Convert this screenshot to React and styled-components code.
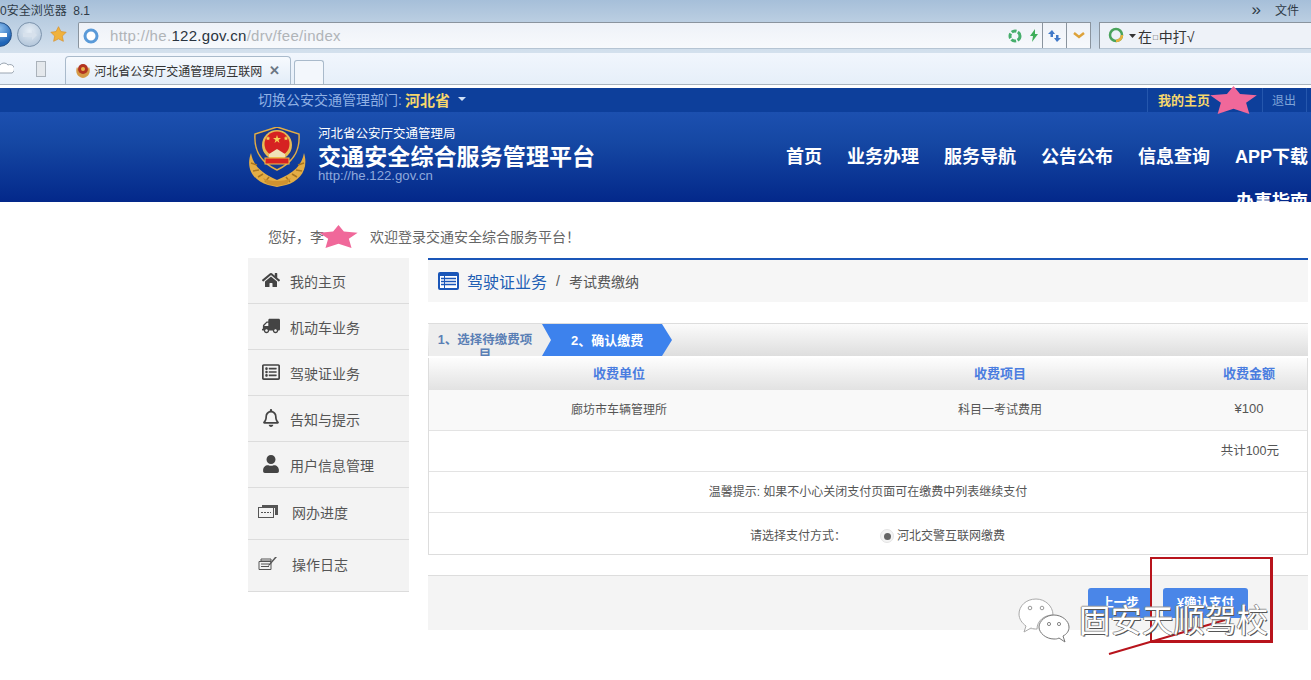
import styled, { createGlobalStyle } from "styled-components";
import { FaHome, FaTruck, FaRegListAlt, FaRegBell, FaUser } from "react-icons/fa";

const SANS = `"Liberation Sans", "Noto Sans CJK SC", sans-serif`;

const GlobalStyle = createGlobalStyle`
  html, body {
    margin: 0;
    padding: 0;
    background: #fff;
    height: 680px;
    overflow: hidden;
    font-family: ${SANS};
  }
  * { box-sizing: border-box; }
`;

const Page = styled.div`
  position: relative;
  width: 1311px;
  height: 680px;
  overflow: hidden;
`;

/* browser chrome */
const Chrome = styled.div`
  height: 85px;
  background: linear-gradient(#a6bfd9 0, #b9cde1 20px, #d3e0ed 52px);
  border-bottom: 1px solid #a9b4bf;
`;

const TitleBar = styled.div`
  height: 21px;
  display: flex;
  align-items: center;
  justify-content: space-between;
  padding: 0 12px 2px 0;
  font-size: 12px;
  color: #2f3b47;
  white-space: nowrap;
`;

const TitleRight = styled.div`
  display: flex;
  gap: 14px;
  align-items: center;
`;

const Chevrons = styled.span`
  font-size: 17px;
  line-height: 14px;
`;

const AddressRow = styled.div`
  height: 32px;
  display: flex;
  align-items: flex-start;
  padding-top: 1px;
`;

const NavCircle = styled.div`
  width: 25px;
  height: 25px;
  border-radius: 50%;
  flex: none;
  display: flex;
  align-items: center;
  justify-content: center;
  border: 1px solid ${(p) => (p.$active ? "#234f86" : "#7c93ac")};
  background: ${(p) =>
    p.$active
      ? "radial-gradient(circle at 50% 25%, #8fc0ee, #1f64b6 70%)"
      : "radial-gradient(circle at 50% 35%, #e6eef6, #b3c6da 80%)"};
  margin-left: ${(p) => p.$offset}px;
`;

const StarSlot = styled.div`
  width: 18px;
  margin: 4px 10px 0 8px;
  flex: none;
`;

const AddressBox = styled.div`
  width: 1013px;
  height: 27px;
  background: linear-gradient(#eef2f8, #f7f9fc);
  border: 1px solid #8a949e;
  border-bottom-color: #b5c4d3;
  border-radius: 2px 0 0 2px;
  display: flex;
  align-items: center;
  padding-left: 4px;
  flex: none;
`;

const Url = styled.div`
  margin-left: 11px;
  flex: 1;
  font-size: 15px;
  letter-spacing: 0.3px;
  color: #b0b4b8;
  white-space: nowrap;
  & b {
    font-weight: 400;
    color: #2a3440;
  }
`;

const AddressTool = styled.div`
  height: 100%;
  width: ${(p) => p.$w}px;
  display: flex;
  align-items: center;
  justify-content: center;
  border-left: ${(p) => (p.$line ? "1px solid #8a949e" : "0")};
  flex: none;
`;

const SearchBox = styled.div`
  margin-left: 8px;
  flex: 1;
  height: 27px;
  background: #eef2f8;
  border: 1px solid #8a949e;
  border-right: 0;
  border-bottom-color: #b5c4d3;
  display: flex;
  align-items: center;
  padding-left: 8px;
  gap: 3px;
  font-size: 14px;
  color: #333;
`;

const SearchText = styled.span`
  margin-left: -1px;
  white-space: nowrap;
`;

const SmallSquare = styled.span`
  font-size: 8px;
  margin: 0 1px;
  vertical-align: 2px;
`;

const TabRow = styled.div`
  height: 31px;
  background: linear-gradient(#f1f6fd, #e6eff9);
  display: flex;
  align-items: flex-end;
  padding-left: 0;
`;

const TabIcon = styled.div`
  width: ${(p) => p.$w}px;
  flex: none;
  align-self: center;
  padding-left: ${(p) => p.$left}px;
  display: flex;
`;

const Tab = styled.div`
  width: 226px;
  height: 28px;
  margin-left: 6px;
  background: linear-gradient(#f7fafe, #e3edf8);
  border: 1px solid #a9bacb;
  border-bottom: 0;
  border-radius: 4px 4px 0 0;
  display: flex;
  align-items: center;
  padding-left: 9px;
  font-size: 12px;
  color: #333;
  white-space: nowrap;
  flex: none;
`;

const TabClose = styled.span`
  margin-left: 3px;
  font-weight: 700;
  font-size: 13px;
  color: #6b7683;
`;

const NewTab = styled.div`
  width: 30px;
  height: 24px;
  margin-left: 3px;
  background: #f3f7fc;
  border: 1px solid #a9bacb;
  border-bottom: 0;
  border-radius: 3px 3px 0 0;
`;

/* site header */
const TopBar = styled.div`
  margin-top: 3px;
  height: 24px;
  background: #0d3f9b;
  display: flex;
  align-items: center;
  justify-content: space-between;
  padding: 0 4px 0 258px;
  font-size: 14px;
  color: #8fb0e4;
  white-space: nowrap;
`;

const Dept = styled.div`
  display: flex;
  align-items: center;
  gap: 3px;
  margin-top: -2px;
  & b {
    color: #f6d76c;
    font-weight: 700;
    font-size: 15px;
  }
`;

const Caret = styled.i`
  margin: 0 0 0 5px;
  border: 4px solid transparent;
  border-top-color: #cfe0f7;
  border-bottom: 0;
`;

const UserLinks = styled.div`
  display: flex;
  height: 100%;
`;

const UserCell = styled.div`
  width: ${(p) => p.$w}px;
  display: flex;
  align-items: center;
  padding: 0 0 2px ${(p) => p.$left}px;
  border-left: 1px solid #2557ad;
  border-right: ${(p) => (p.$end ? "1px solid #2557ad" : "0")};
  color: ${(p) => (p.$gold ? "#f6d76c" : "#7fa3d8")};
  font-weight: ${(p) => (p.$gold ? 700 : 400)};
  font-size: ${(p) => (p.$gold ? 13 : 12)}px;
`;

const Banner = styled.div`
  height: 90px;
  background: linear-gradient(#1c50b0 0, #1547a3 35%, #03288a 100%);
  overflow: hidden;
  display: flex;
  padding: 12px 0 0 248px;
  color: #fff;
`;

const Brand = styled.div`
  width: 70px;
  flex: none;
  margin-top: 3px;
`;

const BrandText = styled.div`
  width: 280px;
  flex: none;
  white-space: nowrap;
`;

const BrandSub = styled.div`
  font-size: 12.5px;
  line-height: 18px;
  margin-top: 1px;
`;

const BrandTitle = styled.div`
  font-size: 23px;
  font-weight: 700;
  line-height: 28px;
  letter-spacing: 0.1px;
`;

const BrandUrl = styled.div`
  font-size: 13.2px;
  line-height: 10px;
  color: #8fa9dc;
`;

const Nav = styled.div`
  margin-left: 186px;
  width: 524px;
  padding-top: 20px;
  display: flex;
  flex-wrap: wrap;
  justify-content: flex-end;
  column-gap: 25px;
  row-gap: 19px;
  flex: none;
`;

const NavItem = styled.div`
  font-size: 18px;
  line-height: 26px;
  font-weight: 700;
  white-space: nowrap;
`;

/* page content */
const Greeting = styled.div`
  height: 56px;
  padding: 25px 0 0 268px;
  font-size: 14px;
  line-height: 20px;
  color: #666;
  white-space: nowrap;
  & span {
    margin-left: 46px;
  }
`;

const Content = styled.div`
  display: flex;
  padding-left: 248px;
  align-items: flex-start;
`;

const Sidebar = styled.div`
  width: 161px;
  flex: none;
`;

const MenuItem = styled.div`
  height: ${(p) => (p.$tall ? 52 : 46)}px;
  background: #f3f3f3;
  border-bottom: 1px solid #dcdcdc;
  display: flex;
  align-items: center;
  padding: 0 0 ${(p) => (p.$tall ? 4 : 0)}px ${(p) => (p.$tall ? 10 : 14)}px;
  font-size: 14px;
  color: #555;
`;

const MenuIcon = styled.div`
  width: ${(p) => (p.$tall ? 34 : 28)}px;
  flex: none;
  display: flex;
  color: #444;
  margin-top: -1px;
  font-size: 18px;
  transform: ${(p) => (p.$flip ? "scaleX(-1)" : "none")};
  transform-origin: 9px 50%;
`;

const Main = styled.div`
  margin-left: 19px;
  width: 880px;
  flex: none;
`;

const Crumb = styled.div`
  height: 44px;
  background: #f6f6f6;
  border-top: 2px solid #1a56b8;
  display: flex;
  align-items: center;
  padding: 0 0 1px 10px;
  font-size: 14px;
  color: #555;
  margin-bottom: 21px;
`;

const CrumbTitle = styled.span`
  margin-left: 8px;
  font-size: 16px;
  color: #1f5fb4;
`;

const CrumbSep = styled.span`
  margin: 0 9px;
`;

const Steps = styled.div`
  height: 33px;
  overflow: hidden;
  display: flex;
  border-top: 1px solid #ddd;
  background: linear-gradient(#fbfbfb, #dedede);
  padding-left: 1px;
`;

const StepOne = styled.div`
  width: 122px;
  height: 100%;
  flex: none;
  background: #eeeeee;
  padding: 9px 14px 0 4px;
  font-size: 12.5px;
  line-height: 15px;
  font-weight: 700;
  color: #5a7fb5;
  text-align: center;
`;

const StepTwo = styled.div`
  width: 130px;
  height: 100%;
  flex: none;
  margin-left: -9px;
  background: #3d82ed;
  clip-path: polygon(0 0, 120px 0, 130px 50%, 120px 100%, 0 100%, 9px 50%);
  color: #fff;
  font-size: 13px;
  line-height: 15px;
  font-weight: 700;
  padding: 9px 0 0 29px;
`;

const Table = styled.div`
  margin-top: 2px;
  border: 1px solid #ddd;
  border-top: 0;
`;

const HeadRow = styled.div`
  height: 32px;
  display: grid;
  grid-template-columns: 380px 382px 1fr;
  align-items: center;
  text-align: center;
  padding-bottom: 3px;
  background: linear-gradient(#fdfdfd, #e2e2e2);
  font-size: 13px;
  font-weight: 700;
  color: #4a7de0;
`;

const DataRow = styled.div`
  height: 41px;
  display: grid;
  grid-template-columns: 380px 382px 1fr;
  align-items: center;
  text-align: center;
  padding-bottom: 3px;
  background: #f9f9f9;
  border-bottom: 1px solid #e3e3e3;
  font-size: 12px;
  color: #555;
`;

const Amount = styled.span`
  font-size: 13px;
`;

const TotalRow = styled.div`
  height: 41px;
  display: flex;
  align-items: center;
  justify-content: flex-end;
  padding: 0 28px 3px 0;
  border-bottom: 1px solid #e3e3e3;
  font-size: 12.5px;
  color: #555;
`;

const TipRow = styled.div`
  height: 41px;
  display: flex;
  align-items: center;
  justify-content: center;
  padding-bottom: 3px;
  border-bottom: 1px solid #e3e3e3;
  font-size: 12px;
  color: #555;
`;

const PayRow = styled.div`
  height: 41px;
  display: flex;
  align-items: center;
  padding: 2px 0 0 321px;
  font-size: 12px;
  color: #555;
`;

const PayLabel = styled.span`
  width: 130px;
  flex: none;
`;

const Radio = styled.span`
  width: 14px;
  height: 14px;
  margin: 3px 3px 0 0;
  border-radius: 50%;
  background: #f4f4f4;
  border: 1px solid #e4e4e4;
  display: flex;
  align-items: center;
  justify-content: center;
  &::after {
    content: "";
    width: 7px;
    height: 7px;
    border-radius: 50%;
    background: #666;
  }
`;

const Actions = styled.div`
  margin-top: 20px;
  height: 55px;
  background: #f4f4f4;
  border-top: 1px solid #ddd;
  display: flex;
  justify-content: flex-end;
  gap: 11px;
  padding: 12px 60px 0 0;
`;

const ActionButton = styled.div`
  width: ${(p) => p.$w}px;
  height: 30px;
  border-radius: 3px;
  background: #4a86e8;
  color: #fff;
  font-size: 12.5px;
  font-weight: 700;
  padding-bottom: 4px;
  display: flex;
  align-items: center;
  justify-content: center;
`;

/* marks drawn over the screenshot */
const Star = styled.svg`
  position: absolute;
  left: ${(p) => p.$x}px;
  top: ${(p) => p.$y}px;
`;

const RedBox = styled.div`
  position: absolute;
  left: 1150px;
  top: 557px;
  width: 123px;
  height: 86px;
  border: 3px solid #b8141c;
  border-width: 2px 3px 3px 2px;
`;

const RedLine = styled.svg`
  position: absolute;
  left: 1100px;
  top: 610px;
`;

const Watermark = styled.div`
  position: absolute;
  left: 1018px;
  top: 598px;
  display: flex;
  align-items: center;
  gap: 9px;
  color: #fff;
  font-size: 31.500px;
  line-height: 46px;
  white-space: nowrap;
  text-shadow: 1px 1px 0 #555, -1px 0 0 #888, 0 -1px 0 #999;
`;

function Emblem() {
  return (
    <svg width="59" height="60" viewBox="0 0 59 60">
      <path d="M3 26C-3 42 6 54 20 58l9 2 9-2c14-4 23-16 18-32-2 12-10 20-27 27C13 46 5 38 3 26z" fill="#e3ad45" />
      <path d="M3 36l6 2M5 44l6-1M10 50l5-3M17 55l4-5M42 55l-4-5M49 50l-5-3M54 44l-6-1M56 36l-6 2" stroke="#a9761f" strokeWidth="1.500" />
      <path d="M29 0l22 7c1 14-3 27-22 36C10 34 6 21 7 7z" fill="#1a3b8e" stroke="#e3ad45" strokeWidth="1.500" />
      <circle cx="29" cy="18" r="15" fill="#e8bb55" />
      <circle cx="29" cy="17" r="12.500" fill="#d62222" />
      <path d="M29 8l1 3h3l-2.500 2 1 3-2.500-2-2.500 2 1-3-2.500-2h3z" fill="#f6d257" />
      <path d="M20 9l.7 1.500 1.600.2-1.200 1 .3 1.600-1.400-.8-1.400.8.3-1.600-1.200-1 1.600-.2zM38 9l.7 1.500 1.600.2-1.200 1 .3 1.600-1.400-.8-1.400.8.3-1.600-1.200-1 1.600-.2z" fill="#f6d257" />
      <path d="M21 27l8-5 8 5v3H21z" fill="#f0e2b8" />
      <rect x="17" y="31" width="24" height="6" fill="#d62222" stroke="#f0c04a" />
      <path d="M15 51c6 4 22 4 28 0l-4 6-10 2-10-2z" fill="#cf9230" />
    </svg>
  );
}

function PinkStar({ x, y, w, h }) {
  return (
    <Star $x={x} $y={y} width={w} height={h} viewBox="0 0 100 60">
      <polygon points="50,0 64,17 100,20 77,36 84,60 50,49 16,60 23,36 0,20 36,17" fill="#f0689a" />
    </Star>
  );
}

function WeChatLogo() {
  return (
    <svg width="52" height="46" viewBox="0 0 52 46">
      <path d="M18 1C8 1 1 8 1 16c0 5 3 9 7 12l-2 6 7-4c2 1 4 1 6 1 0-8 7-14 16-14 0-9-8-16-17-16z" fill="#fff" stroke="#aaa" />
      <path d="M36 17c-8 0-15 6-15 12s7 12 15 12c2 0 3 0 5-1l6 4-2-6c4-2 6-5 6-9 0-6-7-12-15-12z" fill="#fff" stroke="#777" />
      <circle cx="12" cy="10" r="1.800" fill="none" stroke="#999" />
      <circle cx="24" cy="10" r="1.800" fill="none" stroke="#999" />
      <circle cx="31" cy="26" r="1.600" fill="none" stroke="#888" />
      <circle cx="41" cy="26" r="1.600" fill="none" stroke="#888" />
    </svg>
  );
}

function CardIcon() {
  return (
    <svg width="20" height="14" viewBox="0 0 20 14">
      <rect x="0.500" y="3.500" width="15" height="10" fill="#f3f3f3" stroke="#555" />
      <path d="M4 1h16v10h-3V4H4z" fill="#555" />
      <path d="M3 8.500h10" stroke="#555" strokeDasharray="2 1" />
    </svg>
  );
}

function LogIcon() {
  return (
    <svg width="20" height="14" viewBox="0 0 20 14">
      <path d="M3 3h10v2H3zM1 5.500h12v8H1z" fill="none" stroke="#555" />
      <path d="M3 8h8M3 10.500h8" stroke="#555" />
      <path d="M19 1l-7 8-2 1 1-2 6-7z" fill="#555" />
    </svg>
  );
}

function App() {
  return (
    <Page>
      <GlobalStyle />
      <Chrome>
        <TitleBar>
          <span>0安全浏览器&nbsp; 8.1</span>
          <TitleRight>
            <Chevrons>»</Chevrons>
            <span>文件</span>
          </TitleRight>
        </TitleBar>
        <AddressRow>
          <NavCircle $active $offset={-13}>
            <svg width="14" height="10" viewBox="0 0 14 10">
              <path d="M0 5l5-5v3h9v4H5v3z" fill="#fff" />
            </svg>
          </NavCircle>
          <NavCircle $offset={5}>
            <svg width="14" height="10" viewBox="0 0 14 10">
              <path d="M14 5L9 0v3H0v4h9v3z" fill="#d7e1ec" />
            </svg>
          </NavCircle>
          <StarSlot>
            <svg width="17" height="16" viewBox="0 0 24 23">
              <polygon points="12,1 15.500,8 23,9 17.500,14.500 19,22 12,18.500 5,22 6.500,14.500 1,9 8.500,8" fill="#f0b23c" stroke="#d8902a" />
            </svg>
          </StarSlot>
          <AddressBox>
            <svg width="16" height="16" viewBox="0 0 16 16">
              <circle cx="8" cy="8" r="6" fill="#fff" stroke="#5a9ad8" strokeWidth="3" />
            </svg>
            <Url>
              http://he.<b>122.gov.cn</b>/drv/fee/index
            </Url>
            <AddressTool $w={20}>
              <svg width="14" height="14" viewBox="0 0 14 14">
                <circle cx="7" cy="7" r="5" fill="none" stroke="#46ae6c" strokeWidth="3" strokeDasharray="5 1.500" />
              </svg>
            </AddressTool>
            <AddressTool $w={17}>
              <svg width="10" height="13" viewBox="0 0 10 13">
                <path d="M6 0L1 7h3l-1 6 6-8H6z" fill="#3fae5a" />
              </svg>
            </AddressTool>
            <AddressTool $w={24} $line>
              <svg width="15" height="12" viewBox="0 0 15 12">
                <path d="M5 0L1 4h2.500v3H6V4h2zM10 12l4-4h-2.500V5H9v3H7z" fill="#3f78c8" />
              </svg>
            </AddressTool>
            <AddressTool $w={24} $line>
              <svg width="12" height="8" viewBox="0 0 12 8">
                <path d="M1 1l5 4 5-4" fill="none" stroke="#dda23a" strokeWidth="2.500" />
              </svg>
            </AddressTool>
          </AddressBox>
          <SearchBox>
            <svg width="18" height="18" viewBox="0 0 18 18">
              <circle cx="8" cy="8" r="6" fill="none" stroke="#4aa35c" strokeWidth="2.500" />
              <path d="M14 8a6 6 0 0 1-6 6" fill="none" stroke="#e8b23c" strokeWidth="2.500" />
            </svg>
            <svg width="7" height="4" viewBox="0 0 7 4">
              <path d="M0 0h7L3.500 4z" fill="#333" />
            </svg>
            <SearchText>
              在<SmallSquare>□</SmallSquare>中打√
            </SearchText>
          </SearchBox>
        </AddressRow>
        <TabRow>
          <TabIcon $w={29} $left={0}>
            <svg width="14" height="14" viewBox="0 0 14 14">
              <path d="M0 3a5 5 0 0 1 8 0 4 4 0 0 1 4 8H0" fill="#fff" stroke="#9aa5b1" />
            </svg>
          </TabIcon>
          <TabIcon $w={30} $left={7}>
            <svg width="10" height="16" viewBox="0 0 10 16">
              <rect x="0.500" y="0.500" width="9" height="15" fill="#e4e8ec" stroke="#aab2ba" />
            </svg>
          </TabIcon>
          <Tab>
            <svg width="16" height="16" viewBox="0 0 16 16">
              <path d="M2 4c-2 5 0 10 6 11 6-1 8-6 6-11-2 5-10 5-12 0z" fill="#d59a46" />
              <circle cx="8" cy="6" r="5" fill="#b23420" />
              <circle cx="8" cy="6" r="2" fill="#e8b64c" />
            </svg>
            <span>&nbsp;河北省公安厅交通管理局互联网</span>
            <TabClose>&nbsp;✕</TabClose>
          </Tab>
          <NewTab />
        </TabRow>
      </Chrome>

      <TopBar>
        <Dept>
          切换公安交通管理部门: <b>河北省</b>
          <Caret />
        </Dept>
        <UserLinks>
          <UserCell $w={115} $left={10} $gold>
            我的主页
          </UserCell>
          <UserCell $w={45} $left={9} $end>
            退出
          </UserCell>
        </UserLinks>
      </TopBar>

      <Banner>
        <Brand>
          <Emblem />
        </Brand>
        <BrandText>
          <BrandSub>河北省公安厅交通管理局</BrandSub>
          <BrandTitle>交通安全综合服务管理平台</BrandTitle>
          <BrandUrl>http://he.122.gov.cn</BrandUrl>
        </BrandText>
        <Nav>
          <NavItem>首页</NavItem>
          <NavItem>业务办理</NavItem>
          <NavItem>服务导航</NavItem>
          <NavItem>公告公布</NavItem>
          <NavItem>信息查询</NavItem>
          <NavItem>APP下载</NavItem>
          <NavItem>办事指南</NavItem>
        </Nav>
      </Banner>

      <Greeting>
        您好，李<span>欢迎登录交通安全综合服务平台！</span>
      </Greeting>

      <Content>
        <Sidebar>
          <MenuItem>
            <MenuIcon><FaHome /></MenuIcon>我的主页
          </MenuItem>
          <MenuItem>
            <MenuIcon $flip><FaTruck /></MenuIcon>机动车业务
          </MenuItem>
          <MenuItem>
            <MenuIcon><FaRegListAlt /></MenuIcon>驾驶证业务
          </MenuItem>
          <MenuItem>
            <MenuIcon><FaRegBell /></MenuIcon>告知与提示
          </MenuItem>
          <MenuItem>
            <MenuIcon><FaUser /></MenuIcon>用户信息管理
          </MenuItem>
          <MenuItem $tall>
            <MenuIcon $tall><CardIcon /></MenuIcon>网办进度
          </MenuItem>
          <MenuItem $tall>
            <MenuIcon $tall><LogIcon /></MenuIcon>操作日志
          </MenuItem>
        </Sidebar>

        <Main>
          <Crumb>
            <svg width="21" height="18" viewBox="0 0 21 18">
              <rect width="21" height="18" rx="2" fill="#1a56b8" />
              <rect x="2" y="4" width="17" height="12" fill="#fff" />
              <path d="M3 6.500h15M3 9.500h15M3 12.500h15" stroke="#1a56b8" strokeWidth="1.500" />
              <path d="M6.500 4v12" stroke="#1a56b8" />
            </svg>
            <CrumbTitle>驾驶证业务</CrumbTitle>
            <CrumbSep>/</CrumbSep>
            考试费缴纳
          </Crumb>

          <Steps>
            <StepOne>1、选择待缴费项目</StepOne>
            <StepTwo>2、确认缴费</StepTwo>
          </Steps>

          <Table>
            <HeadRow>
              <span>收费单位</span>
              <span>收费项目</span>
              <span>收费金额</span>
            </HeadRow>
            <DataRow>
              <span>廊坊市车辆管理所</span>
              <span>科目一考试费用</span>
              <Amount>¥100</Amount>
            </DataRow>
            <TotalRow>共计100元</TotalRow>
            <TipRow>温馨提示: 如果不小心关闭支付页面可在缴费中列表继续支付</TipRow>
            <PayRow>
              <PayLabel>请选择支付方式：</PayLabel>
              <Radio />
              河北交警互联网缴费
            </PayRow>
          </Table>

          <Actions>
            <ActionButton $w={64}>上一步</ActionButton>
            <ActionButton $w={85}>¥确认支付</ActionButton>
          </Actions>
        </Main>
      </Content>

      <PinkStar x={1205} y={86} w={57} h={28} />
      <PinkStar x={312} y={225} w={53} h={23} />
      <RedBox />
      <RedLine width="130" height="50" viewBox="0 0 130 50">
        <path d="M9 44L125 10" stroke="#b8141c" strokeWidth="2" />
      </RedLine>
      <Watermark>
        <WeChatLogo />
        <span>固安天顺驾校</span>
      </Watermark>
    </Page>
  );
}

export default App;
